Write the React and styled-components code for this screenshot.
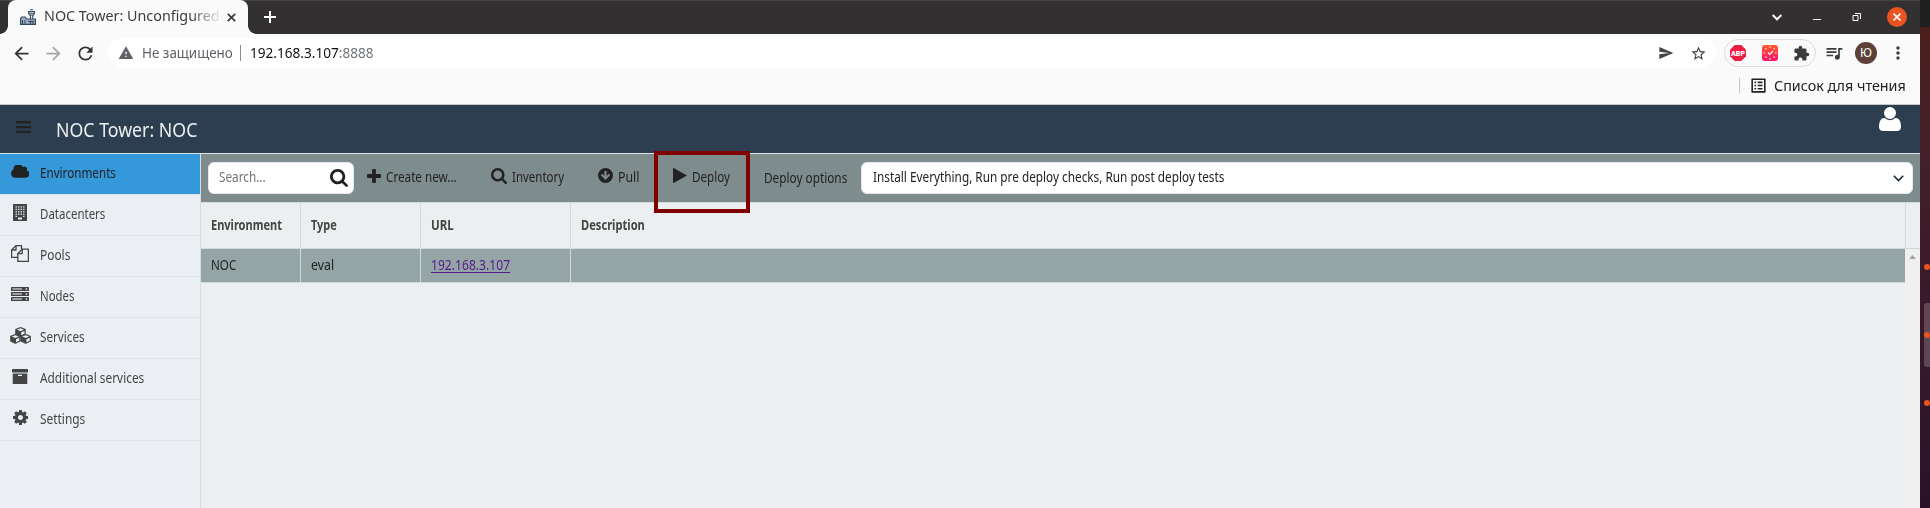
import React, { useLayoutEffect, useRef, useState } from 'react';
import styled, { createGlobalStyle } from 'styled-components';
import {
  MdArrowBack, MdArrowForward, MdRefresh, MdWarning, MdSend, MdStarBorder,
  MdExtension, MdQueueMusic, MdMoreVert, MdOutlineListAlt,
} from 'react-icons/md';

const Global = createGlobalStyle`
  * { box-sizing: border-box; }
  body { margin: 0; overflow: hidden; font-family: "Noto Sans", "Open Sans", sans-serif; }
  svg { display: block; flex: none; }
`;

/* ---------- text condensed to a fixed measure ---------- */
const Measure = styled.span`
  display: block;
  flex: none;
  width: ${p => p.$w}px;
  padding-bottom: 2px;
  white-space: nowrap;
`;
const Glyphs = styled.span`
  display: inline-block;
  transform-origin: 0 50%;
`;
function Text({ w, children, ...rest }) {
  const ref = useRef(null);
  const [k, setK] = useState(1);
  useLayoutEffect(() => {
    setK(w / ref.current.offsetWidth);
  }, [w]);
  return (
    <Measure $w={w} {...rest}>
      <Glyphs ref={ref} style={{ transform: `scaleX(${k})` }}>{children}</Glyphs>
    </Measure>
  );
}

/* ---------- frame ---------- */
const Screen = styled.div`
  display: grid;
  grid-template-columns: 1920px 10px;
  width: 1930px;
  height: 508px;
`;
const Window = styled.div`
  display: flex;
  flex-direction: column;
  min-width: 0;
  background: #fafafa;
`;
const Dock = styled.div`
  position: relative;
  background: linear-gradient(#1f1f1f 27px, #4c1f1d 27px, #43202a 150px, #3b1b2a 270px, #32172b 400px, #291229 508px);
  overflow: hidden;
`;
const DockActive = styled.div`
  position: absolute;
  left: 4px;
  top: 303px;
  width: 12px;
  height: 64px;
  border-radius: 3px;
  background: rgba(255, 255, 255, 0.2);
`;
const DockDot = styled.div`
  position: absolute;
  left: 4px;
  top: ${p => p.$y - 3}px;
  width: 6px;
  height: 6px;
  border-radius: 50%;
  background: #e95420;
`;

/* ---------- browser chrome ---------- */
const TabStrip = styled.div`
  display: flex;
  height: 34px;
  background: #333031;
  box-shadow: inset 0 1px #464445;
`;
const Tab = styled.div`
  position: relative;
  display: flex;
  align-items: center;
  width: 240px;
  margin-left: 8px;
  padding: 0 12px 0 12px;
  border-radius: 8px 8px 0 0;
  background: #fafafa;
  color: #3c3c3c;
  font-size: 14px;
  &::before, &::after {
    content: '';
    position: absolute;
    bottom: 0;
    width: 8px;
    height: 8px;
  }
  &::before { left: -8px; background: radial-gradient(circle at 0 0, #333031 7.5px, #fafafa 8px); }
  &::after { right: -8px; background: radial-gradient(circle at 100% 0, #333031 7.5px, #fafafa 8px); }
`;
const TabTitle = styled.div`
  flex: 1;
  margin: 0 0 0 8px;
  line-height: 20px;
  mask-image: linear-gradient(90deg, #000 146px, transparent 178px);
`;
const NewTab = styled.div`
  display: flex;
  align-items: center;
  margin-left: 16px;
`;
const WindowButtons = styled.div`
  display: flex;
  align-items: center;
  gap: 10px;
  margin-left: auto;
  padding-right: 8px;
`;
const WindowButton = styled.div`
  display: flex;
  justify-content: center;
  width: 30px;
`;
const CloseButton = styled.div`
  display: flex;
  align-items: center;
  justify-content: center;
  width: 20px;
  height: 20px;
  margin: 0 5px;
  border-radius: 50%;
  background: #e95420;
`;
const NavBar = styled.div`
  display: flex;
  align-items: center;
  height: 38px;
  color: #3c3c3c;
`;
const NavButton = styled.div`
  display: flex;
  justify-content: center;
  width: 32px;
  color: ${p => (p.$off ? '#a6a6a6' : '#333')};
`;
const NavButtons = styled.div`
  display: flex;
  width: 108px;
  padding-left: 5.500px;
`;
const AddressBar = styled.div`
  display: flex;
  align-items: center;
  width: 1608px;
  height: 30px;
  border-radius: 15px;
  background: #fff;
  padding: 0 9px 0 10px;
  font-size: 14px;
  color: #5f6368;
  > svg { margin-right: 8px; }
`;
const Divider = styled.div`
  width: 1px;
  height: 16px;
  margin: 0 ${p => p.$after}px 0 ${p => p.$before}px;
  background: ${p => p.$c};
`;
const Host = styled.span`color: #111;`;
const Port = styled.span`color: #70757a;`;
const AddressActions = styled.div`
  display: flex;
  align-items: center;
  gap: 16px;
  margin-left: auto;
  color: #444;
`;
const Extensions = styled.div`
  display: flex;
  align-items: center;
  justify-content: space-between;
  width: 92px;
  height: 28px;
  margin-left: 8px;
  padding: 0 5px;
  border: 1px solid #dcdcdc;
  border-radius: 14px;
`;
const Avatar = styled.div`
  width: 22px;
  height: 22px;
  border-radius: 50%;
  background: #5d4037;
  color: #fff;
  font-size: 12px;
  line-height: 21px;
  text-align: center;
`;
const ProfileArea = styled.div`
  display: flex;
  align-items: center;
  width: 96px;
  margin-left: 2px;
`;
const Slot = styled.div`
  display: flex;
  justify-content: center;
  width: 32px;
`;
const Bookmarks = styled.div`
  display: flex;
  align-items: center;
  justify-content: flex-end;
  height: 33px;
  padding: 0 14px 5px 0;
  border-bottom: 1px solid #c6c8ca;
  color: #202124;
  font-size: 14px;
`;
const ReadingList = styled.div`
  display: flex;
  align-items: center;
  gap: 6px;
  > span { padding-bottom: 0; }
`;

/* ---------- application ---------- */
const AppHeader = styled.header`
  display: flex;
  align-items: flex-start;
  height: 49px;
  padding: 15.500px 19px 0 16px;
  background: #2c3e50;
  border-bottom: 1px solid #dce1e3;
  color: #ecf0f1;
`;
const AppTitle = styled.h1`
  flex: 1;
  margin: -4px 0 0 25px;
  font-size: 19.500px;
  font-weight: 400;
  line-height: 26px;
`;
const UserBadge = styled.div`margin-top: -13.500px;`;
const Body = styled.div`
  display: flex;
  flex: 1;
  min-height: 0;
  font-size: 13.500px;
  line-height: 20px;
`;
const Sidebar = styled.nav`
  width: 201px;
  background: #ebeef2;
  border-right: 1px solid #d9dcde;
`;
const SideItem = styled.div`
  display: flex;
  align-items: center;
  height: 41px;
  border-bottom: 1px solid ${p => (p.$active ? '#dde5ea' : '#e0e2e4')};
  background: ${p => (p.$active ? '#3498db' : 'transparent')};
  color: ${p => (p.$active ? '#222' : '#444')};
`;
const SideIcon = styled.div`
  display: flex;
  justify-content: center;
  width: 40px;
  margin-bottom: 6px;
`;
const Main = styled.main`
  position: relative;
  display: flex;
  flex: 1;
  flex-direction: column;
  min-width: 0;
  background: #ebeff0;
`;
const Toolbar = styled.div`
  display: flex;
  align-items: center;
  height: 49px;
  padding: 0 7px;
  background: #7f8c8d;
  border-bottom: 1px solid #d5dcde;
  color: #222;
`;
const Field = styled.div`
  display: flex;
  align-items: center;
  justify-content: space-between;
  height: 32px;
  border: 1px solid #e4e8ea;
  border-radius: 6px;
  background: #fff;
`;
const SearchField = styled(Field)`
  width: 146px;
  margin-right: -4px;
  padding: 0 5px 0 10px;
  color: #757575;
  svg { color: #222; margin-bottom: 1px; }
`;
const SelectField = styled(Field)`
  flex: 1;
  padding: 0 8px 0 10.500px;
  margin-left: 14px;
`;
const ToolButton = styled.div`
  display: flex;
  align-items: center;
  gap: 5px;
  padding: 0 17px;
  > svg { margin-bottom: 5px; }
`;
const OptionsLabel = styled.div`
  margin: 2px 0 0 17px;
`;
const TableRow = styled.div`
  display: grid;
  grid-template-columns: 100px 120px 150px 1fr;
  height: ${p => (p.$head ? 46 : 34)}px;
  margin-right: ${p => (p.$head ? 14 : 0)}px;
  background: ${p => (p.$head ? 'transparent' : '#95a5a6')};
  border-bottom: 1px solid #cfd9db;
  color: ${p => (p.$head ? '#444' : '#222')};
  font-weight: ${p => (p.$head ? 700 : 400)};
`;
const HeadBar = styled.div`
  border-bottom: 1px solid #cfd9db;
  height: 46px;
`;
const Cell = styled.div`
  display: flex;
  align-items: center;
  padding-left: 10px;
  border-right: 1px solid #d0dadc;
  ${TableRow} &:last-child { border-right-width: ${p => (p.$edge ? 1 : 0)}px; }
`;
const Link = styled.a`
  color: #551a8b;
  text-decoration: underline;
  text-underline-offset: 2px;
`;
const TableBody = styled.div`
  display: grid;
  grid-template-columns: 1fr 15px;
  flex: 1;
`;
const Scrollbar = styled.div`
  display: flex;
  justify-content: center;
  padding-top: 6px;
  background: #f0f0f0;
`;
const Highlight = styled.div`
  position: absolute;
  left: 453px;
  top: -3px;
  width: 96px;
  height: 62px;
  border: 4px solid #800000;
`;

/* ---------- icons ---------- */
const Svg = ({ w, h = w, box, children }) => (
  <svg width={w} height={h} viewBox={box} fill="currentColor">{children}</svg>
);
const SearchIcon = ({ s }) => (
  <Svg w={s} box="64 128 1664 1664">
    <path d="M1216 832q0-185-131.500-316.500t-316.500-131.500-316.500 131.500-131.500 316.500 131.500 316.500 316.500 131.500 316.500-131.500 131.500-316.500zm512 832q0 52-38 90t-90 38q-54 0-90-38l-343-342q-179 124-399 124-143 0-273.500-55.500t-225-150-150-225-55.500-273.500 55.500-273.500 150-225 225-150 273.500-55.500 273.500 55.500 225 150 150 225 55.500 273.500q0 220-124 399l343 343q37 37 37 90z" />
  </Svg>
);
const PlusIcon = () => (
  <Svg w={14} box="192 128 1408 1408">
    <path d="M1600 736v192q0 40-28 68t-68 28h-416v416q0 40-28 68t-68 28h-192q-40 0-68-28t-28-68v-416h-416q-40 0-68-28t-28-68v-192q0-40 28-68t68-28h416v-416q0-40 28-68t68-28h192q40 0 68 28t28 68v416h416q40 0 68 28t28 68z" />
  </Svg>
);
const PullIcon = () => (
  <Svg w={15} box="0 0 15 15">
    <path fillRule="evenodd" d="M7.500 0a7.500 7.500 0 1 1 0 15a7.500 7.500 0 0 1 0-15zM6.400 3v4.900L4.300 5.800L2.800 7.300L7.500 12L12.200 7.300L10.700 5.800L8.600 7.900V3z" />
  </Svg>
);
const PlayIcon = () => (
  <Svg w={14} h={15} box="232 140 1368 1512">
    <path d="M1576 927l-1328 738q-23 13-39.500 3t-16.500-36v-1472q0-26 16.500-36t39.500 3l1328 738q23 13 23 31t-23 31z" />
  </Svg>
);
const BarsIcon = () => (
  <Svg w={15} h={12} box="0 0 15 12">
    <g fill="#222"><rect width="15" height="2.200" rx=".5" /><rect y="5" width="15" height="2.200" rx=".5" /><rect y="9.800" width="15" height="2.200" rx=".5" /></g>
  </Svg>
);
const UserIcon = () => (
  <Svg w={22} h={24} box="192 128 1408 1536">
    <path fill="#fff" d="M1600 1405q0 120-73 189.500t-194 69.500h-874q-121 0-194-69.500t-73-189.500q0-53 3.500-103.500t14-109 26.500-108.500 43-97.500 62-81 85.500-53.500 111.500-20q9 0 42 21.500t74.500 48 108 48 133.500 21.500 133.500-21.500 108-48 74.500-48 42-21.500q61 0 111.500 20t85.500 53.500 62 81 43 97.500 26.500 108.500 14 109 3.500 103.500zm-320-893q0 159-112.500 271.500t-271.500 112.500-271.500-112.500-112.500-271.500 112.500-271.500 271.500-112.500 271.500 112.500 112.500 271.500z" />
  </Svg>
);
const CloudIcon = () => (
  <Svg w={18.500} h={13} box="64 256 1920 1280">
    <path d="M1984 1152q0 159-112.500 271.500t-271.500 112.500h-1088q-185 0-316.500-131.500t-131.500-316.500q0-132 71-241.500t187-163.500q-2-28-2-43 0-212 150-362t362-150q158 0 286.500 88t187.500 230q70-62 166-62 106 0 181 75t75 181q0 75-41 138 129 30 213 134.500t84 239.500z" />
  </Svg>
);
const BuildingIcon = () => (
  <Svg w={14} h={17} box="0 0 14 17">
    <path fillRule="evenodd" d="M.7 0h12.600q.7 0 .7.700v15.600q0 .7-.7.700H.7q-.7 0-.7-.7V.7Q0 0 .7 0zM5 13.500v2h4v-2z" />
    <g fill="#ebeef2">
      {[2.300, 4.700, 7.100, 9.500].map(y => [2.500, 5, 7.600, 10.100].map(x => (
        <rect key={`${x}-${y}`} x={x} y={y} width="1.400" height="1.300" />
      )))}
      <rect x="2.500" y="11.800" width="1.400" height="1.200" /><rect x="10.100" y="11.800" width="1.400" height="1.200" />
    </g>
  </Svg>
);
const FilesIcon = () => (
  <Svg w={18} h={17} box="0 0 18 17">
    <g fill="none" stroke="currentColor" strokeWidth="1.300" strokeLinejoin="round">
      <path d="M10.500 4.200V.6H5L.6 5v7.400h6" />
      <path d="M5 .6V5H.6" />
      <path d="M11.200 4.200h6.200v12.200H6.800V8.600z" />
      <path d="M11.200 4.200v4.400H6.800" />
    </g>
  </Svg>
);
const ServerIcon = () => (
  <Svg w={18} h={14} box="0 0 18 14">
    {[0, 5, 10].map(y => (
      <g key={y}>
        <rect y={y} width="18" height="4" rx=".5" />
        <rect x="1.400" y={y + 1.300} width="9.500" height="1.400" fill="#c3c6c9" />
        <rect x="14.700" y={y + 1.300} width="1.500" height="1.400" fill="#ebeef2" />
      </g>
    ))}
  </Svg>
);
const Cube = ({ x, y }) => (
  <g transform={`translate(${x} ${y})`}>
    <path d="M5.200 0L10.200 2v5L5.200 9.400L.2 7V2z" stroke="currentColor" strokeWidth=".6" strokeLinejoin="round" />
    <path fill="#ebeef2" d="M5.200 1L8.700 2.400L5.200 3.900L1.700 2.400zM5.900 5L9.200 3.600V6.500L5.900 8z" />
  </g>
);
const CubesIcon = () => (
  <Svg w={21} h={17} box="0 0 21 17">
    <Cube x={5.300} y={0.300} /><Cube x={0.100} y={7.200} /><Cube x={10.500} y={7.200} />
  </Svg>
);
const ArchiveIcon = () => (
  <Svg w={16} h={15} box="0 0 16 15">
    <rect width="16" height="3.600" rx=".6" />
    <path fillRule="evenodd" d="M.7 4.400h14.600v10q0 .6-.6.600H1.300q-.6 0-.6-.6zM6.500 5.800a.6.600 0 0 0 0 1.300h3a.6.600 0 0 0 0-1.300z" />
  </Svg>
);
const CogIcon = () => (
  <Svg w={15} box="128 128 1536 1536">
    <path d="M1152 896q0-106-75-181t-181-75-181 75-75 181 75 181 181 75 181-75 75-181zm512-109v222q0 12-8 23t-20 13l-185 28q-19 54-39 91 35 50 107 138 10 12 10 25t-9 23q-27 37-99 108t-94 71q-12 0-26-9l-138-108q-44 23-91 38-16 136-29 186-7 28-36 28h-222q-14 0-24.500-8.500t-11.500-21.500l-28-184q-49-16-90-37l-141 107q-10 9-25 9-14 0-25-11-126-114-165-168-7-10-7-23 0-12 8-23 15-21 51-66.500t54-70.500q-27-50-41-99l-183-27q-13-2-21-12.500t-8-23.500v-222q0-12 8-23t19-13l186-28q14-46 39-92-40-57-107-138-10-12-10-24 0-10 9-23 26-36 98.500-107.500t94.500-71.500q13 0 26 10l138 107q44-23 91-38 16-136 29-186 7-28 36-28h222q14 0 24.500 8.500t11.500 21.500l28 184q49 16 90 37l142-107q9-9 24-9 13 0 25 10 129 119 165 170 7 8 7 22 0 12-8 23-15 21-51 66.500t-54 70.500q26 50 41 98l183 28q13 2 21 12.500t8 23.500z" />
  </Svg>
);
const Stroke = ({ w, h = w, d, sw = 2, c = 'currentColor' }) => (
  <svg width={w} height={h} viewBox={`0 0 ${w} ${h}`} fill="none" stroke={c} strokeWidth={sw}><path d={d} /></svg>
);
const TowerFavicon = () => (
  <svg width="16" height="16" viewBox="0 0 16 16" fill="none" stroke="#34495e">
    <path d="M8.500 2.500h6l-.8 3.500h-4.400zM10 .7h3M10.500 6v4M12.700 6v4M8 4.200h7" strokeWidth="1.100" />
    <path d="M.6 15.400V9.500L2 8h3l1.500 2h8.900v5.400z" fill="#9fb0c2" strokeWidth="1.200" />
    <path d="M2.500 11v4M5 11v4M8 12.500h6M10.500 11.500v3.500M13 12v3" strokeWidth="1" />
  </svg>
);
const AbpIcon = () => (
  <svg width="16" height="16" viewBox="0 0 16 16">
    <path fill="#ed1e45" d="M4.700 0h6.600L16 4.700v6.600L11.300 16H4.700L0 11.300V4.700z" />
    <text x="8" y="10.700" textAnchor="middle" textLength="14" lengthAdjust="spacingAndGlyphs" fontFamily="Roboto, sans-serif" fontWeight="900" fontSize="7.500" fill="#fff">ABP</text>
  </svg>
);
const ClockIcon = () => (
  <svg width="16" height="16" viewBox="0 0 16 16">
    <defs><linearGradient id="clock" x2="0" y2="1"><stop stopColor="#ff5a2c" /><stop offset="1" stopColor="#fb1169" /></linearGradient></defs>
    <rect width="16" height="16" rx="3" fill="url(#clock)" />
    <g fill="#ffe4e0">
      {Array.from({ length: 8 }, (_, i) => (
        <circle key={i} cx={8 + 5.900 * Math.sin(i * Math.PI / 4)} cy={8 - 5.900 * Math.cos(i * Math.PI / 4)} r=".8" />
      ))}
    </g>
    <path d="M6 7.500L7.800 9.300L11 6" fill="none" stroke="#fff" strokeWidth="1.200" />
  </svg>
);

const sections = [
  ['Environments', 76, CloudIcon],
  ['Datacenters', 65.500, BuildingIcon],
  ['Pools', 30, FilesIcon],
  ['Nodes', 34.500, ServerIcon],
  ['Services', 45, CubesIcon],
  ['Additional services', 104.500, ArchiveIcon],
  ['Settings', 45, CogIcon],
];

export default function App() {
  return (
    <Screen>
      <Global />
      <Window>
        <TabStrip>
          <Tab>
            <TowerFavicon />
            <TabTitle><Text w={176}>NOC Tower: Unconfigured</Text></TabTitle>
            <Stroke w={9} d="M.8.800l7.400 7.400M8.200.800L.8 8.200" sw={1.800} />
          </Tab>
          <NewTab><Stroke w={12} d="M6 0v12M0 6h12" c="#fff" /></NewTab>
          <WindowButtons>
            <WindowButton><Stroke w={12} h={7} d="M1.700 1L6 5.300L10.300 1" c="#fff" /></WindowButton>
            <WindowButton><Stroke w={8} h={6} d="M0 5.500h8" sw={1} c="#fff" /></WindowButton>
            <WindowButton><Stroke w={10} h={9} d="M1 2.500h5v5h-5zM3 .5h5.500v5.500" sw={1} c="#fff" /></WindowButton>
            <CloseButton><Stroke w={8} d="M.5.500l7 7M7.500.500l-7 7" sw={1.600} c="#fff" /></CloseButton>
          </WindowButtons>
        </TabStrip>
        <NavBar>
          <NavButtons>
            <NavButton><MdArrowBack size={21} /></NavButton>
            <NavButton $off><MdArrowForward size={21} /></NavButton>
            <NavButton><MdRefresh size={21} /></NavButton>
          </NavButtons>
          <AddressBar>
            <MdWarning size={16} />
            <Text w={91}>Не защищено</Text>
            <Divider $before={7} $after={9} $c="#8b8e92" />
            <Text w={123.500}><Host>192.168.3.107</Host><Port>:8888</Port></Text>
            <AddressActions><MdSend size={16} /><MdStarBorder size={17} /></AddressActions>
          </AddressBar>
          <Extensions><AbpIcon /><ClockIcon /><MdExtension size={17} /></Extensions>
          <ProfileArea>
            <Slot><MdQueueMusic size={20} /></Slot>
            <Slot><Avatar>Ю</Avatar></Slot>
            <Slot><MdMoreVert size={20} /></Slot>
          </ProfileArea>
        </NavBar>
        <Bookmarks>
          <Divider $before={0} $after={9} $c="#c4c7ca" />
          <ReadingList>
            <MdOutlineListAlt size={19} />
            <Text w={132}>Список для чтения</Text>
          </ReadingList>
        </Bookmarks>
        <AppHeader>
          <BarsIcon />
          <AppTitle><Text w={141}>NOC Tower: NOC</Text></AppTitle>
          <UserBadge><UserIcon /></UserBadge>
        </AppHeader>
        <Body>
          <Sidebar>
            {sections.map(([name, w, Icon], i) => (
              <SideItem key={name} $active={i === 0}>
                <SideIcon><Icon /></SideIcon>
                <Text w={w}>{name}</Text>
              </SideItem>
            ))}
          </Sidebar>
          <Main>
            <Toolbar>
              <SearchField><Text w={47}>Search...</Text><SearchIcon s={18} /></SearchField>
              <ToolButton><PlusIcon /><Text w={71}>Create new...</Text></ToolButton>
              <ToolButton><SearchIcon s={16} /><Text w={52}>Inventory</Text></ToolButton>
              <ToolButton><PullIcon /><Text w={21}>Pull</Text></ToolButton>
              <ToolButton><PlayIcon /><Text w={38}>Deploy</Text></ToolButton>
              <OptionsLabel><Text w={83}>Deploy options</Text></OptionsLabel>
              <SelectField>
                <Text w={351}>Install Everything, Run pre deploy checks, Run post deploy tests</Text>
                <Stroke w={11} h={7} d="M.8.800L5.500 5.500L10.200.800" sw={1.600} c="#1d2733" />
              </SelectField>
            </Toolbar>
            <HeadBar>
              <TableRow $head>
                <Cell><Text w={71}>Environment</Text></Cell>
                <Cell><Text w={26}>Type</Text></Cell>
                <Cell><Text w={23}>URL</Text></Cell>
                <Cell $edge><Text w={63.500}>Description</Text></Cell>
              </TableRow>
            </HeadBar>
            <TableBody>
              <div>
                <TableRow>
                  <Cell><Text w={25}>NOC</Text></Cell>
                  <Cell><Text w={23}>eval</Text></Cell>
                  <Cell><Text w={79}><Link>192.168.3.107</Link></Text></Cell>
                  <Cell />
                </TableRow>
              </div>
              <Scrollbar><svg width="7" height="4" viewBox="0 0 7 4"><path d="M3.500 0L7 4H0z" fill="#a3a3a3" /></svg></Scrollbar>
            </TableBody>
            <Highlight />
          </Main>
        </Body>
      </Window>
      <Dock>
        <DockActive />
        <DockDot $y={267} /><DockDot $y={335} /><DockDot $y={403} />
      </Dock>
    </Screen>
  );
}
